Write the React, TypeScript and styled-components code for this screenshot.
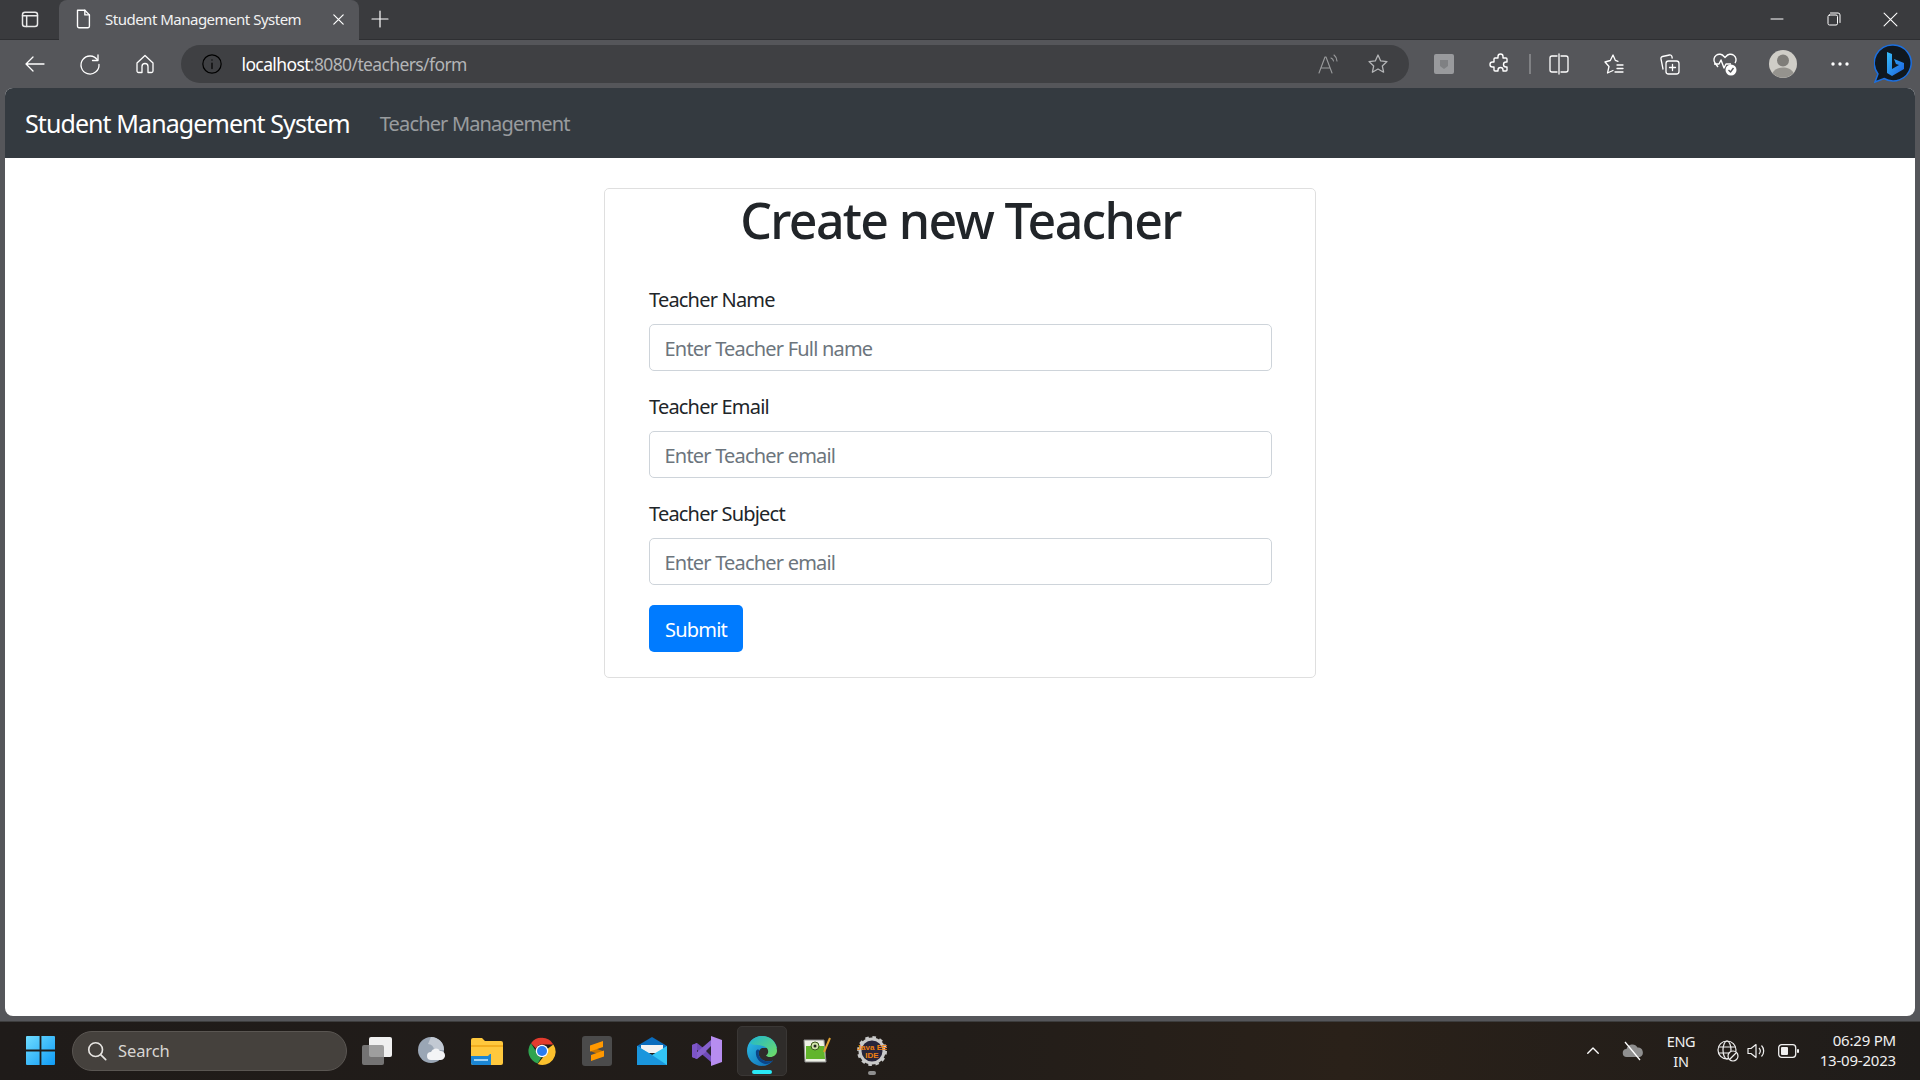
import React from "react";
import styled, { createGlobalStyle } from "styled-components";

const Global = createGlobalStyle`
  html, body { margin: 0; padding: 0; height: 100%; overflow: hidden; background: #55565a; }
  #root { height: 100%; }
  * { box-sizing: border-box; }
  body { font-family: "Noto Sans", "Open Sans", sans-serif; }
`;

const Screen = styled.div`
  width: 1920px; height: 1080px; display: flex; flex-direction: column; overflow: hidden; background: #55565a;
`;
const TabStrip = styled.div`
  height: 40px; flex: none; display: flex; align-items: stretch; background: #3a3b3e; border-bottom: 1px solid #2e2f32; padding-bottom: 1px;
`;
const Slot = styled.div<{ $w: number }>`
  width: ${p => p.$w}px; flex: none; display: flex; align-items: center; justify-content: center; color: #fff;
`;
const Tab = styled.div`
  width: 300px; flex: none; height: 40px; background: #55565a; border-radius: 8px 8px 0 0; display: flex; align-items: center;
  padding-left: 13px; padding-bottom: 2px; color: #fff;
`;
const TabTitle = styled.span`
  margin-left: 11px; flex: 1; font-size: 15px; letter-spacing: -0.5px; white-space: nowrap; color: #f2f2f2;
`;
const WindowControls = styled.div`
  margin-left: auto; display: flex; padding-right: 1px;
`;
const Toolbar = styled.div`
  height: 48px; flex: none; display: flex; align-items: center; padding-left: 7px;
`;
const AddressBar = styled.div`
  width: 1228px; height: 38px; margin-left: 9px; margin-right: 7px; flex: none; background: #3f4043; border-radius: 19px; display: flex; align-items: center; padding-left: 20px;
`;
const Url = styled.div`
  margin-left: 18.5px; font-size: 17.5px; letter-spacing: -0.62px; color: #b4b5b7; white-space: nowrap; flex: 1;
`;
const UrlHost = styled.span`
  color: #fff;
`;
const Separator = styled.div`
  width: 2px; height: 20px; background: #808184; flex: none;
`;
const Viewport = styled.div`
  flex: none; height: 928px; margin: 0 5px; background: #fff; border-radius: 8px; overflow: hidden; display: flex; flex-direction: column;
`;
const Navbar = styled.nav`
  height: 70px; flex: none; background: #343a40; display: flex; align-items: center; padding-left: 20px;
`;
const Brand = styled.a`
  font-size: 25px; letter-spacing: -0.92px; color: #fff; white-space: nowrap;
`;
const NavLink = styled.a`
  margin-left: 30px; font-size: 20px; letter-spacing: -0.84px; color: rgba(255,255,255,.5); white-space: nowrap;
`;
const Card = styled.form`
  width: 712px; margin: 30px auto 0; border: 1px solid #dfdfdf; border-radius: 5px; padding: 0 43px 25px 44px;
  color: #212529;
`;
const Title = styled.h1`
  margin: 0 0 35px; height: 60px; font-size: 50px; line-height: 62px; font-weight: 500; text-align: center; letter-spacing: -1.64px;
`;
const Group = styled.div`
  margin-bottom: 20px;
`;
const Label = styled.label`
  display: block; font-size: 20px; height: 30px; line-height: 32px; margin-bottom: 10px; letter-spacing: -0.8px;
`;
const Input = styled.input`
  display: block; width: 100%; height: 47px; padding: 2px 14px 0 14.5px; font: inherit; font-size: 20px; letter-spacing: -0.8px;
  border: 1px solid #ced4da; border-radius: 5px; background: #fff; outline: none;
  &::placeholder { color: #6c757d; opacity: 1; }
`;
const Submit = styled.button`
  display: block; width: 94px; height: 47px; border: 0; border-radius: 5px; background: #007bff; color: #fff; font: inherit; font-size: 20px; letter-spacing: -0.8px; padding: 1px 0 0;
`;
const Taskbar = styled.div`
  margin-top: 5px; flex: 1; display: flex; align-items: center; padding: 0 24px 1px 26px; color: #fff;
  background: linear-gradient(90deg, #1f1b19 0%, #221d19 50%, #2a2119 70%, #1f1c1a 100%);
  border-top: 1px solid #3d3d3d;
`;
const SearchPill = styled.div`
  width: 275px; height: 40px; margin-left: 17px; margin-right: 2px; flex: none; border-radius: 20px; background: #45413d; border: 1px solid #5a5652;
  display: flex; align-items: center; padding-left: 13px; color: #d8d6d3; font-size: 16.5px; letter-spacing: -0.1px;
`;
const SearchText = styled.span`
  margin-left: 10px;
`;
const ActiveApp = styled.div`
  width: 50px; height: 50px; margin: 0 2.5px; flex: none; position: relative; display: flex; align-items: center; justify-content: center;
  background: #2f2c2a; border: 1px solid #3a3735; border-radius: 5px;
`;
const Indicator = styled.div<{ $c: string; $w: number }>`
  position: absolute; bottom: 1px; left: 50%; transform: translateX(-50%); width: ${p => p.$w}px; height: 4px; border-radius: 2px; background: ${p => p.$c};
`;
const AppSlot = styled(Slot)`
  position: relative; height: 50px;
`;
const Tray = styled.div`
  margin-left: auto; display: flex; align-items: center;
`;
const Lang = styled.div`
  font-size: 14.5px; line-height: 20px; text-align: center; color: #f0f0f0; letter-spacing: -0.3px;
`;
const Clock = styled.div`
  width: 100%; font-size: 15px; line-height: 20px; text-align: right; color: #f0f0f0; letter-spacing: -0.2px; white-space: nowrap; margin-top: -1px;
`;

const Ico = ({ s = 22, vb = 24, sw = 1.5, c = "currentColor", children }: { s?: number; vb?: number; sw?: number; c?: string; children: React.ReactNode }) => (
  <svg width={s} height={s} viewBox={`0 0 ${vb} ${vb}`} fill="none" stroke={c} strokeWidth={sw} strokeLinecap="round" strokeLinejoin="round">{children}</svg>
);

const WinLogo = () => (
  <svg width="29" height="29" viewBox="0 0 29 29">
    <defs><linearGradient id="w" x1="0" y1="0" x2="1" y2="1"><stop offset="0" stopColor="#6fdcff" /><stop offset="1" stopColor="#0f9bf5" /></linearGradient></defs>
    <path fill="url(#w)" d="M0 1a1 1 0 0 1 1-1h12.6v13.6H0zM15.4 0H28a1 1 0 0 1 1 1v12.6H15.4zM0 15.4h13.6V29H1a1 1 0 0 1-1-1zM15.4 15.4H29V28a1 1 0 0 1-1 1H15.4z" />
  </svg>
);
const TaskView = () => (
  <svg width="30" height="28" viewBox="0 0 30 28">
    <rect x="7" y="0" width="23" height="20" rx="2" fill="#f0f0f0" />
    <rect x="0" y="8" width="22" height="20" rx="2" fill="#8a8a8a" fillOpacity=".8" />
  </svg>
);
const Weather = () => (
  <svg width="28" height="28" viewBox="0 0 28 28">
    <circle cx="13" cy="13" r="13" fill="#9aa6b5" />
    <path d="M13 0a13 13 0 0 1 13 13H16a6 6 0 0 0-6-6z" fill="#c2c9d3" />
    <path d="M13 23a4 4 0 0 1 0-8 5 5 0 0 1 9-1 4.5 4.5 0 0 1 1 9z" fill="#f3f4f6" />
  </svg>
);
const Folder = () => (
  <svg width="32" height="28" viewBox="0 0 32 28">
    <path d="M0 3a2 2 0 0 1 2-2h9l3 3h16a2 2 0 0 1 2 2v20a2 2 0 0 1-2 2H2a2 2 0 0 1-2-2z" fill="#ffc83d" />
    <path d="M0 8h32v2H0z" fill="#f2ad1f" />
    <path d="M0 19h17l2-2h1v11H2a2 2 0 0 1-2-2z" fill="#1b86d4" />
    <rect x="3" y="22" width="14" height="2" fill="#9ed2f5" />
  </svg>
);
const Chrome = () => (
  <svg width="30" height="30" viewBox="0 0 48 48">
    <path d="M24 3a21 21 0 0 1 18.2 10.5H24a10.500 10.500 0 0 0-9.600 6.300L6.400 11.500A21 21 0 0 1 24 3z" fill="#e33b2e" />
    <path d="M6.400 11.500 15 25.500a10.500 10.500 0 0 0 8 8.900L17 44A21 21 0 0 1 6.400 11.500z" fill="#2fa44f" />
    <path d="M42.200 13.500A21 21 0 0 1 17 44.800L26 33.600a10.500 10.500 0 0 0 7-13.400z" fill="#fbc02d" />
    <circle cx="24" cy="24" r="10" fill="#fff" />
    <circle cx="24" cy="24" r="8" fill="#2a7cf0" />
  </svg>
);
const Sublime = () => (
  <svg width="30" height="30" viewBox="0 0 30 30">
    <rect width="30" height="30" rx="3" fill="#4b4b4b" />
    <path d="M8 10.500 22 15.500v4.500L8 15z" fill="#c97500" />
    <path d="M21 5v6L8 15.500v-6zM22 14.500v6L9 25v-6z" fill="#ff9800" />
  </svg>
);
const Mail = () => (
  <svg width="30" height="28" viewBox="0 0 30 28">
    <path d="M0 9 15 0l15 9v3H0z" fill="#0a6cbd" />
    <path d="M4 8h22v8H4z" fill="#f2f2f2" />
    <path d="M0 9l15 9 15-9v19H0z" fill="#32c5f5" />
    <path d="M0 28V9l15 9 15 10z" fill="#1a96dd" />
  </svg>
);
const VS = () => (
  <svg width="30" height="30" viewBox="0 0 30 30">
    <path d="M0 9l5-2 14 11v8l-14-12-5 4z" fill="#6f4bb8" />
    <path d="M0 21l5 2L19 12V4L5 16l-5-4z" fill="#8560cc" />
    <path d="M0 9l5-2v16l-5-2z" fill="#7d55c7" />
    <path d="M19 0l11 4v22l-11 4z" fill="#b78df0" />
    <path d="M19 10l-5 5 5 5z" fill="#2a2530" />
  </svg>
);
const Edge = () => (
  <svg width="30" height="30" viewBox="0 0 30 30">
    <defs>
      <linearGradient id="e1" x1="0" y1="0" x2="1" y2="1"><stop offset="0" stopColor="#2fc4e8" /><stop offset="1" stopColor="#0c62b0" /></linearGradient>
      <linearGradient id="e2" x1="0" y1="0" x2="1" y2="1"><stop offset="0" stopColor="#1fb6d0" /><stop offset="1" stopColor="#72de62" /></linearGradient>
    </defs>
    <path d="M15 0C6.500 0 0 6.500 0 15c0 8.500 7 15 15 15 4.500 0 8.500-2 11-5.500-5 2-12 .5-14-5-1-3 0-6 3-7.500H30C29 5.500 23 0 15 0z" fill="url(#e1)" />
    <path d="M3 7C6 2.500 10 0 15 0c8 0 15 6 15 14.500 0 4-3 6.500-7 6.500-2 0-3.500-.6-4-1.500 3-2 3-6.500-.5-8.500C13 8 6 10 3 7z" fill="url(#e2)" />
    <path d="M9 15c-1 6 3 12 9 13 3 .4 6-1 8-3.500-5 2-12 .5-14-5-.6-2-.4-4 .8-5.500C11 13 9.500 13.500 9 15z" fill="#0b4488" />
  </svg>
);
const Npp = () => (
  <svg width="28" height="28" viewBox="0 0 28 28">
    <path d="M1 3h20l2 22H2z" fill="#eef1e6" stroke="#8c8c8c" />
    <path d="M3 9h18l1 13H3z" fill="#62b52c" />
    <circle cx="12" cy="9" r="4" fill="#cfe3a8" stroke="#3c5a1c" />
    <circle cx="12" cy="9" r="1.500" fill="#222" />
    <path d="M21 15 27 1" stroke="#e0a030" strokeWidth="2" />
  </svg>
);
const JavaIDE = () => (
  <svg width="30" height="30" viewBox="0 0 30 30">
    <circle cx="15" cy="15" r="12" fill="#28253a" stroke="#c9c9c9" strokeWidth="3" />
    <circle cx="15" cy="15" r="13.500" fill="none" stroke="#c9c9c9" strokeWidth="3" strokeDasharray="3.500 3.570" />
    <text x="15" y="14" fontSize="8" textAnchor="middle" fill="#f08010" fontFamily="Liberation Sans, sans-serif" fontWeight="700">Java EE</text>
    <text x="15" y="22" fontSize="8" textAnchor="middle" fill="#f08010" fontFamily="Liberation Sans, sans-serif" fontWeight="700">IDE</text>
  </svg>
);
const Bing = () => (
  <svg width="38" height="40" viewBox="0 0 38 40">
    <defs><linearGradient id="b" x1="0" y1="0" x2="1" y2="1"><stop offset="0" stopColor="#37bdf8" /><stop offset="1" stopColor="#1b5fe0" /></linearGradient></defs>
    <path d="M19 1a18 18 0 1 1-9 33.500L1 38l3-8A18 18 0 0 1 19 1z" fill="#101820" stroke="#1b6fe0" strokeWidth="1.500" />
    <path d="M13 8l5 2v15l7-4-3-1-2-5 10 4v6l-12 7-5-3z" fill="url(#b)" />
  </svg>
);
const Avatar = () => (
  <svg width="28" height="28" viewBox="0 0 28 28">
    <circle cx="14" cy="14" r="14" fill="#cfcdc7" />
    <circle cx="14" cy="10.500" r="6" fill="#7f7d79" />
    <path d="M3.500 23c2-4 6-5.500 10.500-5.500S22.500 19 24.500 23a14 14 0 0 1-21 0z" fill="#95938e" />
  </svg>
);

export default function App() {
  return (
    <Screen>
      <Global />
      <TabStrip>
        <Slot $w={59}>
          <Ico s={20} sw={1.800} c="#e8e8e8"><rect x="3" y="4" width="18" height="17" rx="3" /><path d="M3 8h18M8 8v13" /></Ico>
        </Slot>
        <Tab>
          <Ico s={22}><path d="M6 2.500h8l5 5V20a1.500 1.500 0 0 1-1.500 1.500h-10A1.500 1.500 0 0 1 6 20z" /><path d="M14 2.500v5h5" /></Ico>
          <TabTitle>Student Management System</TabTitle>
          <Slot $w={42}>
            <Ico s={15} vb={16} sw={1.300}><path d="M3 3l10 10M13 3 3 13" /></Ico>
          </Slot>
        </Tab>
        <Slot $w={42}>
          <Ico s={20} vb={20} sw={1.200}><path d="M10 2v16M2 10h16" /></Ico>
        </Slot>
        <WindowControls>
          <Slot $w={57}><Ico s={14} vb={14} sw={1}><path d="M1 7h12" /></Ico></Slot>
          <Slot $w={57}><Ico s={14} vb={14} sw={1}><rect x="1" y="3" width="9.500" height="10" rx="1.500" /><path d="M3.500 1H11a2 2 0 0 1 2 2v7.500" /></Ico></Slot>
          <Slot $w={57}><Ico s={15} vb={14} sw={1}><path d="M1 1l12 12M13 1 1 13" /></Ico></Slot>
        </WindowControls>
      </TabStrip>
      <Toolbar>
        <Slot $w={55}><Ico s={24} sw={1.300}><path d="M21 12H3M10 5l-7 7 7 7" /></Ico></Slot>
        <Slot $w={55}><Ico s={24} sw={1.300}><path d="M19.500 8A9 9 0 1 0 21 12.500" /><path d="M14.500 8.500H20V3" /></Ico></Slot>
        <Slot $w={55}><Ico s={24} sw={1.300}><path d="M4 11l8-7.500 8 7.500v8a1.500 1.500 0 0 1-1.500 1.500H15v-6a3 3 0 0 0-6 0v6H5.500A1.500 1.500 0 0 1 4 19z" /></Ico></Slot>
        <AddressBar>
          <Ico s={22} sw={1.300}><circle cx="12" cy="12" r="10" /><path d="M12 11v6M12 7.500v.2" /></Ico>
          <Url><UrlHost>localhost</UrlHost>:8080/teachers/form</Url>
          <Slot $w={50}>
            <Ico s={24} sw={1.100} c="#9a9b9d"><path d="M3 21 9 5h1l6 16M5 16h9" /><path d="M15 6a4 4 0 0 1 2.500 3M18 3a8 8 0 0 1 3 6" /></Ico>
          </Slot>
          <Slot $w={50}>
            <Ico s={24} sw={1.300} c="#b4b5b7"><path d="M12 3l2.700 5.900 6.300.7-4.700 4.300 1.300 6.300L12 17l-5.600 3.200 1.300-6.300L3 9.600l6.300-.7z" /></Ico>
          </Slot>
          <Slot $w={6} />
        </AddressBar>
        <Slot $w={55.500}>
          <svg width="20" height="20" viewBox="0 0 20 20"><rect width="20" height="20" rx="2" fill="#999a9d" /><path d="M6 6h8v6l-4 3-4-3z" fill="#7f8083" /></svg>
        </Slot>
        <Slot $w={57}>
          <Ico s={24} sw={1.400}><path d="M10 4.500a2.500 2.500 0 0 1 5 0V6h3a1 1 0 0 1 1 1v3h-1a2.500 2.500 0 0 0 0 5h1v3a1 1 0 0 1-1 1h-3v-1a2.500 2.500 0 0 0-5 0v1H7a1 1 0 0 1-1-1v-3H4.500a2.500 2.500 0 0 1 0-5H6V7a1 1 0 0 1 1-1h3z" /></Ico>
        </Slot>
        <Separator />
        <Slot $w={56}>
          <Ico s={24} sw={1.300}><path d="M10 4H5a2 2 0 0 0-2 2v12a2 2 0 0 0 2 2h5M14 4h5a2 2 0 0 1 2 2v12a2 2 0 0 1-2 2h-5M12 2v20" /></Ico>
        </Slot>
        <Slot $w={55.500}>
          <Ico s={24} sw={1.300}><path d="M16 9.300 13.300 8.300 11 3 8.300 8.500 3 10l4 4.500-1.500 6.500 5.500-2.500" /><path d="M15 13h6M15 16.500h6M13 20h8" /></Ico>
        </Slot>
        <Slot $w={55.500}>
          <Ico s={24} sw={1.300}><path d="M5 17 3 7a2 2 0 0 1 1.500-2.500l7-1.500a2 2 0 0 1 2.400 1.500l.3 1.500" /><rect x="8" y="9" width="13" height="13" rx="2.500" /><path d="M14.500 12.500v6M11.500 15.500h6" /></Ico>
        </Slot>
        <Slot $w={55.500}>
          <svg width="26" height="26" viewBox="0 0 26 26" fill="none" stroke="#fff" strokeWidth="1.400" strokeLinejoin="round"><path d="M6 16 3 12a5.500 5.500 0 0 1 9-6.500l1 1 1-1A5.500 5.500 0 0 1 23 12" /><path d="M2 13h5l2-4 3 8 2-4h5" /><circle cx="19" cy="19" r="5.500" fill="#fff" stroke="none" /><path d="M16.500 19l2 2 3-4" stroke="#55565a" /></svg>
        </Slot>
        <Slot $w={60}><Avatar /></Slot>
        <Slot $w={53}>
          <svg width="18" height="4" viewBox="0 0 18 4"><circle cx="2" cy="2" r="1.700" fill="#fff" /><circle cx="9" cy="2" r="1.700" fill="#fff" /><circle cx="16" cy="2" r="1.700" fill="#fff" /></svg>
        </Slot>
        <Slot $w={53}><Bing /></Slot>
      </Toolbar>
      <Viewport>
        <Navbar>
          <Brand>Student Management System</Brand>
          <NavLink>Teacher Management</NavLink>
        </Navbar>
        <Card onSubmit={e => e.preventDefault()}>
          <Title>Create new Teacher</Title>
          <Group>
            <Label>Teacher Name</Label>
            <Input placeholder="Enter Teacher Full name" />
          </Group>
          <Group>
            <Label>Teacher Email</Label>
            <Input placeholder="Enter Teacher email" />
          </Group>
          <Group>
            <Label>Teacher Subject</Label>
            <Input placeholder="Enter Teacher email" />
          </Group>
          <Submit type="submit">Submit</Submit>
        </Card>
      </Viewport>
      <Taskbar>
        <WinLogo />
        <SearchPill>
          <Ico s={22} sw={1.800} c="#e6e4e1"><circle cx="10.500" cy="10.500" r="7.500" /><path d="M16 16l5.500 5.500" /></Ico>
          <SearchText>Search</SearchText>
        </SearchPill>
        <AppSlot $w={55}><TaskView /></AppSlot>
        <AppSlot $w={55}><Weather /></AppSlot>
        <AppSlot $w={55}><Folder /></AppSlot>
        <AppSlot $w={55}><Chrome /></AppSlot>
        <AppSlot $w={55}><Sublime /></AppSlot>
        <AppSlot $w={55}><Mail /></AppSlot>
        <AppSlot $w={55}><VS /></AppSlot>
        <ActiveApp><Edge /><Indicator $c="#2ae8f5" $w={20} /></ActiveApp>
        <AppSlot $w={55}><Npp /></AppSlot>
        <AppSlot $w={55}><JavaIDE /><Indicator $c="#8f8f8f" $w={8} /></AppSlot>
        <Tray>
          <Slot $w={40}><Ico s={18} sw={1.800}><path d="M5 15l7-7 7 7" /></Ico></Slot>
          <Slot $w={40}>
            <svg width="22" height="20" viewBox="0 0 22 20"><path d="M5 16a4 4 0 0 1-.5-8 6 6 0 0 1 11-1.500A5 5 0 0 1 18 16z" fill="#8f8f8f" /><path d="M3 1l15 18" stroke="#fff" strokeWidth="1.300" /></svg>
          </Slot>
          <Slot $w={56}><Lang>ENG<br />IN</Lang></Slot>
          <Slot $w={38}>
            <svg width="22" height="22" viewBox="0 0 22 22" fill="none" stroke="#f0f0f0" strokeWidth="1.200"><circle cx="10" cy="10" r="9" /><ellipse cx="10" cy="10" rx="4" ry="9" /><path d="M1.500 7h17M1.500 13h17" /><circle cx="16" cy="16" r="5" fill="#221d19" /><path d="M13 19l6-6" /></svg>
          </Slot>
          <Slot $w={20}>
            <svg width="20" height="18" viewBox="0 0 20 18" fill="none" stroke="#f0f0f0" strokeWidth="1.200" strokeLinejoin="round"><path d="M1 6.500v5h3l5 4V2.500l-5 4z" /><path d="M12 6a4.500 4.500 0 0 1 0 6M14.500 3.500a8 8 0 0 1 0 11" /></svg>
          </Slot>
          <Slot $w={42}>
            <svg width="21" height="14" viewBox="0 0 21 14"><rect x=".7" y=".7" width="17" height="12.600" rx="3" fill="none" stroke="#f0f0f0" strokeWidth="1.300" /><rect x="3" y="3" width="7" height="8" rx="1" fill="#f0f0f0" /><rect x="19" y="5" width="2" height="4" rx="1" fill="#f0f0f0" /></svg>
          </Slot>
          <Slot $w={87}><Clock>06:29 PM<br />13-09-2023</Clock></Slot>
        </Tray>
      </Taskbar>
    </Screen>
  );
}
